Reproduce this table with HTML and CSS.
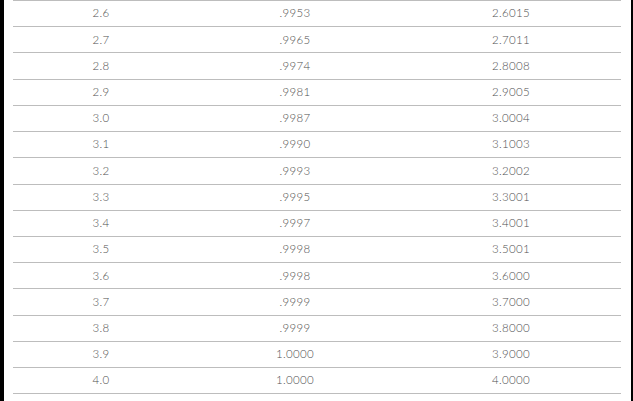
FILE: index.html
```html
<!DOCTYPE html>
<html>
<head>
<meta charset="utf-8">
<link rel="stylesheet" href="styles.css">
</head>
<body>
<div class="frame">
  <table class="data">
    <tbody>
      <tr><td>2.6</td><td>.9953</td><td>2.6015</td></tr>
      <tr><td>2.7</td><td>.9965</td><td>2.7011</td></tr>
      <tr><td>2.8</td><td>.9974</td><td>2.8008</td></tr>
      <tr><td>2.9</td><td>.9981</td><td>2.9005</td></tr>
      <tr><td>3.0</td><td>.9987</td><td>3.0004</td></tr>
      <tr><td>3.1</td><td>.9990</td><td>3.1003</td></tr>
      <tr><td>3.2</td><td>.9993</td><td>3.2002</td></tr>
      <tr><td>3.3</td><td>.9995</td><td>3.3001</td></tr>
      <tr><td>3.4</td><td>.9997</td><td>3.4001</td></tr>
      <tr><td>3.5</td><td>.9998</td><td>3.5001</td></tr>
      <tr><td>3.6</td><td>.9998</td><td>3.6000</td></tr>
      <tr><td>3.7</td><td>.9999</td><td>3.7000</td></tr>
      <tr><td>3.8</td><td>.9999</td><td>3.8000</td></tr>
      <tr><td>3.9</td><td>1.0000</td><td>3.9000</td></tr>
      <tr><td>4.0</td><td>1.0000</td><td>4.0000</td></tr>
    </tbody>
  </table>
</div>
</body>
</html>
```

FILE: styles.css
```css
html, body {
  margin: 0;
  padding: 0;
  background: #000;
  height: 100%;
}
.frame {
  background: #fff;
  margin: 0 2px 0 4px;
  padding: 0 10px 0 9px;
  height: 401px;
  box-sizing: border-box;
  overflow: hidden;
}
.data {
  width: 100%;
  border-collapse: collapse;
  table-layout: fixed;
  font-family: Lato, "Open Sans", sans-serif;
  font-size: 11.5px;
  font-weight: 300;
  letter-spacing: 0.3px;
  color: #4f4f4f;
  border-top: 1px solid #bdbdbd;
}
.data tr {
  height: 26.23px;
}
.data td {
  padding: 0 0 1px 0;
  text-align: center;
  vertical-align: middle;
  border-bottom: 1px solid #bdbdbd;
  line-height: 1;
}
.data td:nth-child(1) { width: 176px; }
.data td:nth-child(2) { width: 212px; }
```
